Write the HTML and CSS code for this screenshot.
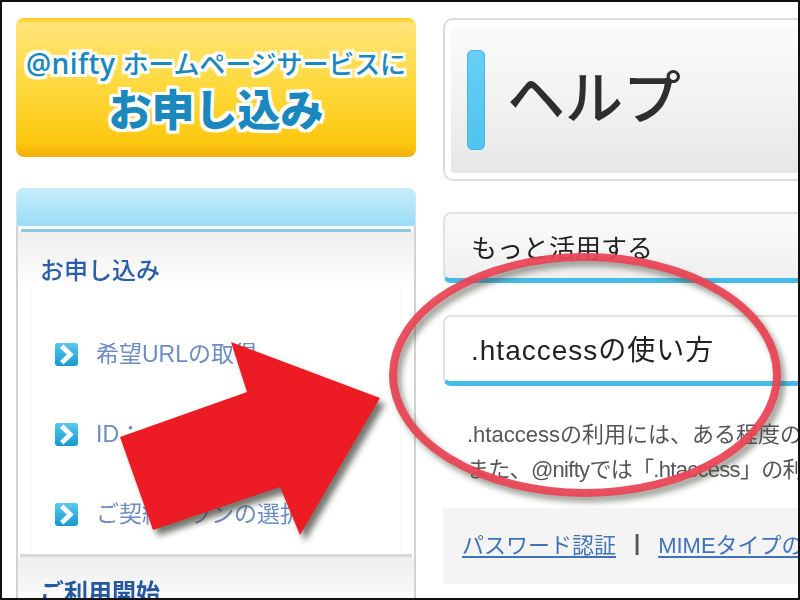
FILE: index.html
```html
<!DOCTYPE html>
<html lang="ja">
<head>
<meta charset="utf-8">
<title>ヘルプ</title>
<link rel="stylesheet" href="styles.css">
</head>
<body>
<div class="frame">
  <div class="page">
    <aside class="side">
      <a class="banner">
        <span class="banner-top"><span class="at">@nifty</span> ホームページサービスに</span>
        <span class="banner-main">お申し込み</span>
      </a>
      <div class="panel">
        <div class="panel-top"></div>
        <div class="panel-rule"></div>
        <div class="panel-body">
          <h3 class="panel-head">お申し込み</h3>
          <ul class="menu">
            <li class="menu-item">
              <svg class="chev" viewBox="0 0 24 24"><defs><linearGradient id="cg" x1="0" y1="0" x2="0" y2="1"><stop offset="0" stop-color="#5cc8f0"/><stop offset="1" stop-color="#149ad2"/></linearGradient></defs><rect width="24" height="24" rx="2.5" fill="url(#cg)"/><path d="M7 3.5 L16 12 L7 20.5" fill="none" stroke="#fff" stroke-width="5"/></svg>
              <span class="menu-text">希望URLの取得</span>
            </li>
            <li class="menu-item">
              <svg class="chev" viewBox="0 0 24 24"><rect width="24" height="24" rx="2.5" fill="url(#cg)"/><path d="M7 3.5 L16 12 L7 20.5" fill="none" stroke="#fff" stroke-width="5"/></svg>
              <span class="menu-text">ID：パスワード</span>
            </li>
            <li class="menu-item">
              <svg class="chev" viewBox="0 0 24 24"><rect width="24" height="24" rx="2.5" fill="url(#cg)"/><path d="M7 3.5 L16 12 L7 20.5" fill="none" stroke="#fff" stroke-width="5"/></svg>
              <span class="menu-text">ご契約プランの選択</span>
            </li>
          </ul>
          <div class="panel-divider"></div>
          <h3 class="panel-head">ご利用開始</h3>
        </div>
      </div>
    </aside>
    <main class="content">
      <header class="help-box">
        <div class="help-inner">
          <span class="help-mark"></span>
          <h1 class="help-title">ヘルプ</h1>
        </div>
      </header>
      <h2 class="bar bar-grey">もっと活用する</h2>
      <h2 class="bar bar-white">.htaccessの使い方</h2>
      <p class="copy">.htaccessの利用には、ある程度の<br><span class="copy-tight">また、@niftyでは「.htaccess」の利</span></p>
      <div class="links"><a class="link">パスワード認証</a><span class="sep">|</span><a class="link">MIMEタイプの</a></div>
    </main>
  </div>
  <svg class="overlay" viewBox="0 0 796 596">
    <g transform="translate(-2 -2)">
      <ellipse class="ring" cx="585" cy="375" rx="192" ry="118"/>
      <polygon class="arrow" points="380,398 231,342 247,392 120,437 153,530 280,487 300,535"/>
    </g>
  </svg>
</div>
</body>
</html>
```
FILE: styles.css
```css
* { box-sizing: border-box; }
html, body { margin: 0; padding: 0; background: #fff; }
.frame {
  position: relative;
  width: 800px;
  height: 600px;
  border: 2px solid #111;
  overflow: hidden;
  background: #fff;
  font-family: "Liberation Sans", "Noto Sans CJK JP", sans-serif;
}
.page {
  display: flex;
  gap: 27px;
  padding: 16px 0 0 14px;
  filter: blur(0.6px);
}
.side { width: 400px; flex: none; }
.banner {
  display: flex;
  flex-direction: column;
  align-items: center;
  height: 139px;
  padding-top: 24px;
  border-radius: 8px;
  background: linear-gradient(#fdc916 0, #ffe47c 6px, #ffe36c 16px, #fed83c 50%, #fcc80f 90%, #f3ae08 100%);
  color: #1a88bd;
  white-space: nowrap;
  text-shadow: 3px 0 0 #fff, -3px 0 0 #fff, 0 3px 0 #fff, 0 -3px 0 #fff, 2px 2px 0 #fff, -2px 2px 0 #fff, 2px -2px 0 #fff, -2px -2px 0 #fff, 3px 3px 1px #fff, -3px 3px 1px #fff, 3px -3px 1px #fff, -3px -3px 1px #fff;
}
.banner-top { font-size: 26px; line-height: 42px; font-weight: 500; letter-spacing: -0.1px; }
.at { font-family: "Open Sans", "Liberation Sans", sans-serif; font-size: 28px; font-weight: 600; letter-spacing: 0.4px; }
.banner-main { font-size: 43px; line-height: 50px; font-weight: 900; }
.panel { margin-top: 31px; }
.panel-top {
  height: 38px;
  border: 1px solid #c9e6f2;
  border-bottom: 0;
  border-radius: 8px 8px 0 0;
  background: linear-gradient(#c6edfb, #9bdcf5);
}
.panel-rule {
  height: 6px;
  padding: 3px 3px 0;
  border: solid #d2d2d2;
  border-width: 0 2px;
  background: #fff content-box;
}
.panel-rule::before { content: ""; display: block; height: 3px; background: #86c8e6; }
.panel-body {
  height: 372px;
  border: solid #d2d2d2;
  border-width: 0 2px;
  overflow: hidden;
}
.panel-head {
  margin: 0;
  height: 58px;
  padding: 24px 0 0 22px;
  font-size: 24px;
  line-height: 30px;
  font-weight: 500;
  color: #2a5ea6;
  background: linear-gradient(#eeeeee, #ffffff);
}
.menu {
  list-style: none;
  margin: 0 13px;
  padding: 24px 0 0;
  border: solid #f7f7f7;
  border-width: 0 1px;
}
.menu-item {
  display: flex;
  align-items: center;
  gap: 18px;
  height: 80px;
  padding-left: 23px;
  font-size: 23px;
  color: #6d8cc2;
  white-space: nowrap;
}
.menu-text { margin-bottom: 4px; }
.chev { width: 23px; height: 23px; flex: none; }
.panel-divider { height: 3px; margin: 0 2px; background: #d8d8d8; }
.panel-divider + .panel-head { font-weight: 700; padding-top: 21px; color: #24589f; }
.content { flex: 1; min-width: 0; margin-right: -10px; overflow: hidden; }
.help-box {
  height: 163px;
  padding: 6px 0 6px 6px;
  border: solid #dcdcdc;
  border-width: 2px 0 2px 2px;
  border-radius: 10px 0 0 10px;
}
.help-inner {
  display: flex;
  align-items: center;
  gap: 22px;
  height: 100%;
  padding-left: 16px;
  border-radius: 4px 0 0 4px;
  background: linear-gradient(#fbfbfb, #f2f2f2 50%, #e6e6e6);
}
.help-mark {
  width: 18px;
  height: 100px;
  border-radius: 5px;
  background: linear-gradient(#68cff5, #4fc3ee);
  border: 1px solid #49b4dc;
}
.help-title {
  margin: 0 0 2px;
  font-size: 58px;
  line-height: 1;
  font-weight: 500;
  color: #2e2e2e;
}
.bar {
  margin: 31px 0 0;
  height: 71px;
  padding: 0 0 0 26px;
  display: flex;
  align-items: center;
  font-size: 26px;
  font-weight: 400;
  color: #222;
  border: solid #e2e2e2;
  border-width: 2px 0 0 2px;
  border-bottom: 5px solid #46bbe6;
  border-radius: 8px 0 0 8px;
}
.bar-grey { background: linear-gradient(#fbfbfb, #f0f0f0); }
.bar-white { margin-top: 32px; background: #fff; font-size: 28px; letter-spacing: 1px; padding-bottom: 3px; }
.copy {
  margin: 31px 0 0;
  padding-left: 24px;
  font-size: 22px;
  line-height: 35px;
  color: #555;
  white-space: nowrap;
}
.copy-tight { letter-spacing: -0.7px; }
.links {
  display: flex;
  align-items: center;
  height: 76px;
  margin-top: 21px;
  padding: 0 0 6px 19px;
  font-size: 22px;
  color: #3f72b8;
  background: #f4f4f4;
  white-space: nowrap;
}
.link { text-decoration: underline; text-underline-offset: 3px; }
.sep { margin: 0 18px; color: #555; font-weight: 700; }
.overlay {
  position: absolute;
  left: 0;
  top: 0;
  width: 796px;
  height: 596px;
}
.ring {
  fill: none;
  stroke: #ea4454;
  stroke-width: 8;
  stroke-opacity: 0.93;
  filter: drop-shadow(4px 5px 3px rgba(70, 75, 60, 0.6));
}
.arrow {
  fill: #ed1c24;
  filter: drop-shadow(5px 6px 3px rgba(60, 60, 50, 0.7));
}
```
